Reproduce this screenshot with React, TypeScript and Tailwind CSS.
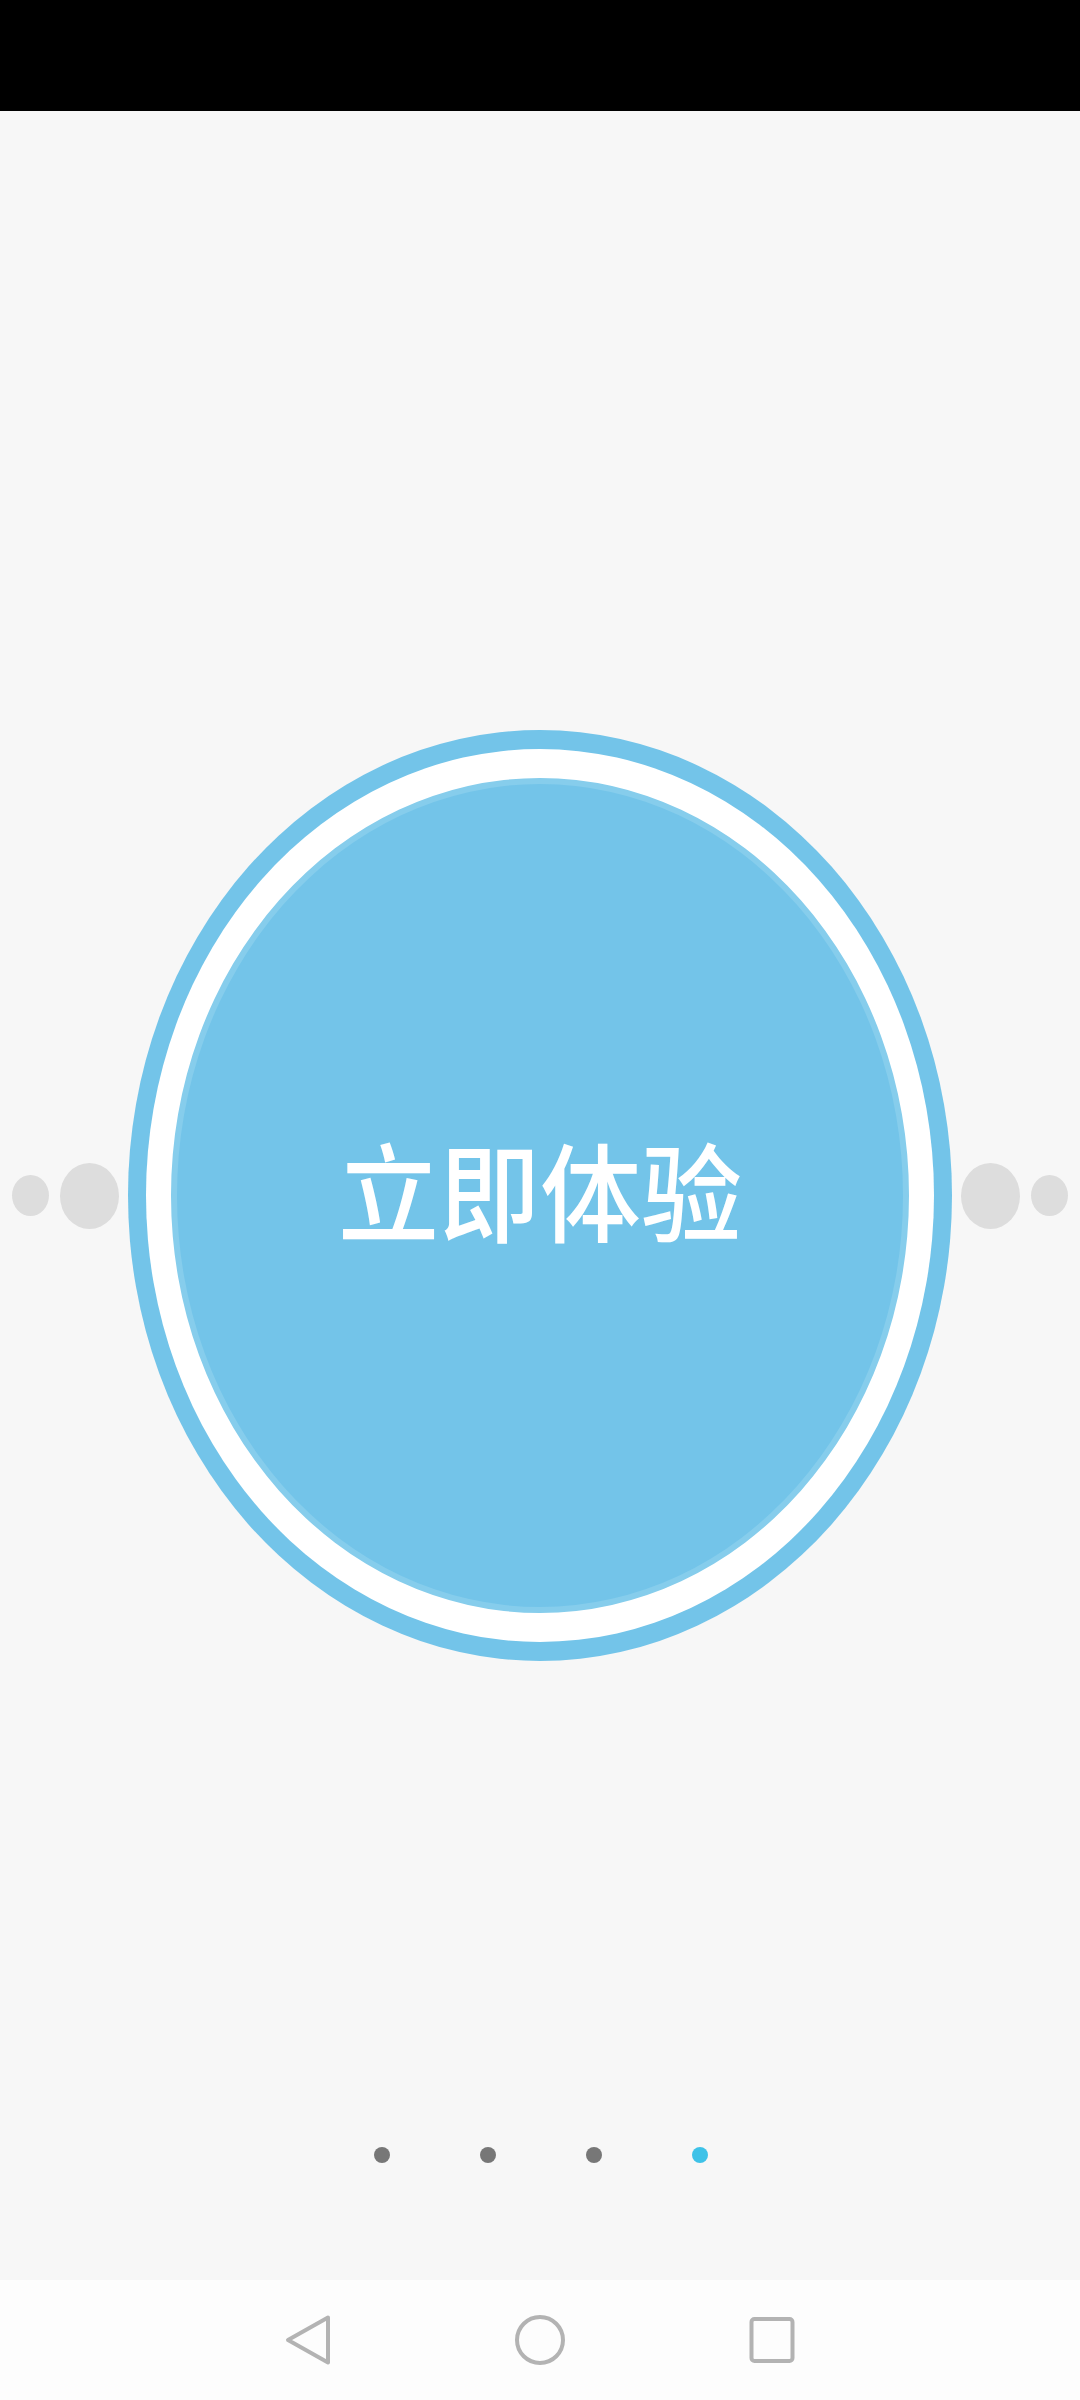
import React from "react";

function Dot({ active }: { active?: boolean }) {
  return (
    <div
      className={
        active
          ? "w-[16px] h-[16px] rounded-full bg-[#3ec2e8]"
          : "w-[16px] h-[16px] rounded-full bg-[#777777]"
      }
    />
  );
}

export default function App() {
  return (
    <div className="w-[1080px] h-[2400px] flex flex-col overflow-hidden">
      <div className="h-[111px] bg-black shrink-0" />
      <div className="relative flex-1 bg-[#f7f7f7] flex items-center justify-center">
        <div className="flex items-center">
          <div className="w-[37px] h-[41px] rounded-[50%] bg-[#dddddd]" />
          <div className="ml-[11px] w-[59px] h-[66px] rounded-[50%] bg-[#dddddd]" />
          <div className="ml-[9px] w-[824px] h-[931px] rounded-[50%] bg-[#73c4e9] px-[18px] py-[19px]">
            <div className="w-full h-full rounded-[50%] bg-white px-[25px] py-[29px]">
              <div className="w-full h-full rounded-[50%] bg-[#73c4e9] border-[6px] border-[#86cdec] flex items-center justify-center">
                <span
                  className="text-white text-[101px] leading-none font-medium scale-y-[1.06] -translate-y-[8px]"
                  style={{ fontFamily: '"Noto Sans CJK SC", "Noto Sans", sans-serif' }}
                >
                  立即体验
                </span>
              </div>
            </div>
          </div>
          <div className="ml-[9px] w-[59px] h-[66px] rounded-[50%] bg-[#dddddd]" />
          <div className="ml-[11px] w-[37px] h-[41px] rounded-[50%] bg-[#dddddd]" />
        </div>
        <div className="absolute left-0 right-0 bottom-[117px] flex justify-center gap-[90px] pl-[2px]">
          <Dot />
          <Dot />
          <Dot />
          <Dot active />
        </div>
      </div>
      <div className="h-[120px] shrink-0 bg-[#fdfdfd] flex items-center justify-center gap-[172px]">
        <svg width="60" height="60" viewBox="0 0 60 60" fill="none">
          <path
            d="M50 7.5 L10 30 L50 52.5 Z"
            stroke="#b3b3b3"
            strokeWidth="4"
            strokeLinejoin="round"
          />
        </svg>
        <svg width="60" height="60" viewBox="0 0 60 60" fill="none">
          <circle cx="30" cy="30" r="23" stroke="#b3b3b3" strokeWidth="4" />
        </svg>
        <svg width="60" height="60" viewBox="0 0 60 60" fill="none">
          <rect x="9.5" y="9" width="41" height="42" rx="3" stroke="#b3b3b3" strokeWidth="4" />
        </svg>
      </div>
    </div>
  );
}
